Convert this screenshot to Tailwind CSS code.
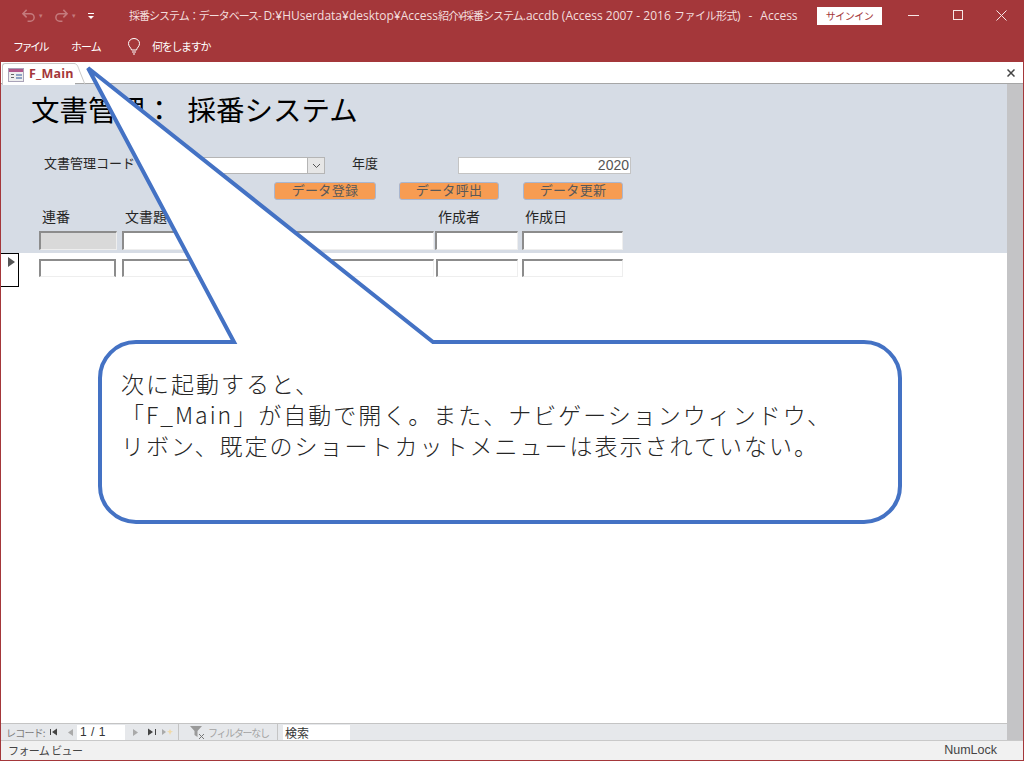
<!DOCTYPE html>
<html lang="ja">
<head>
  <meta charset="UTF-8" />
  <title>F_Main</title>
  <script src="https://cdn.jsdelivr.net/npm/@tailwindcss/browser@4"></script>
</head>
<body class="bg-white overflow-hidden font-['Noto_Sans_CJK_JP','Liberation_Sans',sans-serif]">
<div class="relative w-[1024px] h-[761px] flex flex-col bg-[#a4373a] overflow-hidden">

  <!-- title bar -->
  <div class="h-[31px] flex items-center text-white shrink-0">
    <div class="w-[129px] flex items-center pl-[21px] gap-[3px] text-[#c47a7c]">
      <svg class="w-[15px] h-[15px]" viewBox="0 0 16 16" fill="none" stroke="currentColor" stroke-width="1.6"><path d="M6 2 2 6l4 4M2 6h8a4 4 0 0 1 0 8H7"/></svg>
      <span class="text-[7px] w-[12px]">▾</span>
      <svg class="w-[15px] h-[15px]" viewBox="0 0 16 16" fill="none" stroke="currentColor" stroke-width="1.6"><path d="m10 2 4 4-4 4M14 6H6a4 4 0 0 0 0 8h3"/></svg>
      <span class="text-[7px] w-[12px]">▾</span>
      <svg class="w-[8px] h-[8px] text-white" viewBox="0 0 8 8" fill="currentColor"><rect x="1" y="1" width="6" height="1"/><path d="M1 4h6L4 7z"/></svg>
    </div>
    <div class="w-[688px] text-[11px] text-[#f3dede] whitespace-nowrap"><span class="tracking-[-1px]">採番システム：データベース-</span> <span class="font-['Open_Sans',sans-serif] text-[12px]">D:¥HUserdata¥desktop¥Access</span><span class="tracking-[-1px]">紹介¥採番システム</span><span class="font-['Open_Sans',sans-serif] text-[12px]">.accdb (Access 2007 - 2016 </span><span class="tracking-[-0.5px]">ファイル形式</span><span class="font-['Open_Sans',sans-serif] text-[12px]">)<span class="mx-[8px]">-</span>Access</span></div>
    <div class="w-[65px] h-[18px] bg-white text-[#a4373a] text-[10px] tracking-[-0.5px] flex items-center justify-center">サインイン</div>
    <div class="flex-1 flex items-center pl-[26px] text-[#f7e6e6]">
      <svg class="w-[11px] h-[11px] mr-[34px]" viewBox="0 0 11 11" stroke="currentColor"><path d="M0 5.5h11"/></svg>
      <svg class="w-[11px] h-[11px] mr-[32px]" viewBox="0 0 11 11" fill="none" stroke="currentColor"><rect x=".5" y=".5" width="9" height="9"/></svg>
      <svg class="w-[11px] h-[11px]" viewBox="0 0 11 11" stroke="currentColor"><path d="m.5.5 10 10M10.500.5l-10 10"/></svg>
    </div>
  </div>

  <!-- menu bar -->
  <div class="h-[31px] flex items-center text-white text-[11px] shrink-0 pl-[13px] pb-[1px]">
    <span class="w-[58px] tracking-[-2.500px]">ファイル</span>
    <span class="w-[56px] tracking-[-1px]">ホーム</span>
    <svg class="w-[14px] h-[17px] mr-[11px]" viewBox="0 0 14 17" fill="none" stroke="currentColor"><path d="M4.500 12C4 9.500 1.500 8.500 1.500 5.500a5.500 5 0 0 1 11 0c0 3-2.500 4-3 6.500zM5 14h4M6 16h2"/></svg>
    <span class="tracking-[-1.300px]">何をしますか</span>
  </div>

  <!-- document area -->
  <div class="flex-1 mx-[1px] bg-white flex flex-col min-h-0">
    <!-- tab strip -->
    <div class="h-[22px] shrink-0 flex border-b border-[#a6a6a6] relative">
      <div class="w-[73px] ml-[1px] mt-[1px] h-[22px] rounded-tl-[3px] border-t border-l border-[#c8c8c8] bg-white flex items-center pl-[5px] gap-[5px] z-10">
        <svg class="w-[16px] h-[14px]" viewBox="0 0 16 14"><rect x=".5" y=".5" width="15" height="13" fill="#eee" stroke="#a9a3b8"/><rect x="1" y="1" width="14" height="3" fill="#b0578a"/><path d="M3 6h3v1H3zM3 9h3v1H3z" fill="#666"/><rect x="8" y="6" width="6" height="2" fill="#8fa3c4"/><rect x="8" y="9" width="6" height="2" fill="#8fa3c4"/></svg>
        <span class="text-[12.500px] tracking-[0.2px] font-bold text-[#a4373a] font-['Open_Sans',sans-serif]">F_Main</span>
      </div>
      <svg class="w-[14px] h-[22px] mt-[1px] -ml-[1px] z-10" viewBox="0 0 14 22" fill="none" stroke="#c8c8c8"><path d="M0 .5c3 0 4 3 5 6l6 15"/></svg>
      <svg class="absolute right-[8px] top-[7px] w-[8px] h-[8px]" viewBox="0 0 8 8" stroke="#444" stroke-width="1.500"><path d="m.5.5 7 7M7.500.5l-7 7"/></svg>
    </div>

    <div class="flex-1 flex min-h-0">
      <div class="flex-1 flex flex-col min-w-0">
        <!-- form header -->
        <div class="h-[169px] bg-[#d6dce5] shrink-0 pl-[38px] text-[#262626] text-[13px]">
          <div class="h-[50px] -ml-[8px] pt-[3px] text-[28.500px] leading-[44px] text-black whitespace-nowrap">文書管理：<span class="ml-[14px]">採番システム</span></div>

          <div class="mt-[23px] h-[17px] flex items-center">
            <span class="w-[143px] pl-[5px] pb-[5px]">文書管理コード</span>
            <div class="w-[143px] h-[17px] bg-white border border-[#b5b5b5] flex justify-end">
              <div class="w-[17px] bg-[#e6e6e6] border-l border-[#b5b5b5] flex items-center justify-center">
                <svg class="w-[9px] h-[6px]" viewBox="0 0 9 6" fill="none" stroke="#555"><path d="m1 1 3.500 3.500L8 1"/></svg>
              </div>
            </div>
            <span class="w-[133px] pl-[27px] pb-[5px]">年度</span>
            <div class="w-[173px] h-[17px] bg-white border border-[#c4c4c4] text-right pr-[1px] text-[14px] leading-[15px] text-[#555] font-['Liberation_Sans',sans-serif]">2020</div>
          </div>

          <div class="mt-[8px] h-[18px] flex text-[#595959] tracking-[0.3px]">
            <div class="ml-[235px] w-[102px] bg-[#f79c52] border border-[#a9b6cf] rounded-[3px] text-center leading-[14px]">データ登録</div>
            <div class="ml-[23px] w-[100px] bg-[#f79c52] border border-[#a9b6cf] rounded-[3px] text-center leading-[14px]">データ呼出</div>
            <div class="ml-[24px] w-[100px] bg-[#f79c52] border border-[#a9b6cf] rounded-[3px] text-center leading-[14px]">データ更新</div>
          </div>

          <div class="mt-[8px] h-[18px] flex items-center text-[14px] pb-[2px]">
            <span class="w-[86px] pl-[3px]">連番</span>
            <span class="w-[313px]">文書題名</span>
            <span class="w-[87px]">作成者</span>
            <span>作成日</span>
          </div>

          <div class="h-[19px] mt-[5px] flex">
            <div class="w-[78px] mr-[5px] bg-[#d9d9d9] border-t-2 border-l-2 border-[#8c8c8c] border-r border-b border-r-[#eee] border-b-[#eee]"></div>
            <div class="w-[312px] mr-[1px] bg-white border-t-2 border-l-2 border-[#8c8c8c] border-r border-b border-r-[#eee] border-b-[#eee]"></div>
            <div class="w-[83px] mr-[4px] bg-white border-t-2 border-l-2 border-[#8c8c8c] border-r border-b border-r-[#eee] border-b-[#eee]"></div>
            <div class="w-[101px] bg-white border-t-2 border-l-2 border-[#8c8c8c] border-r border-b border-r-[#eee] border-b-[#eee]"></div>
          </div>
        </div>

        <!-- detail row -->
        <div class="flex-1 flex min-h-0">
          <div class="w-[18px] h-[34px] border border-l-0 border-black pl-[7px] pt-[3px]">
            <svg class="w-[7px] h-[10px]" viewBox="0 0 7 10" fill="#555"><path d="M0 0l7 5-7 5z"/></svg>
          </div>
          <div class="h-[18px] mt-[6px] ml-[20px] flex">
            <div class="w-[77px] mr-[6px] border-t-2 border-l-2 border-r-2 border-[#8c8c8c] border-b border-b-[#eee]"></div>
            <div class="w-[312px] mr-[2px] border-t-2 border-l-2 border-[#8c8c8c] border-r border-b border-r-[#eee] border-b-[#eee]"></div>
            <div class="w-[82px] mr-[4px] border-t-2 border-l-2 border-[#8c8c8c] border-r border-b border-r-[#eee] border-b-[#eee]"></div>
            <div class="w-[101px] border-t-2 border-l-2 border-[#8c8c8c] border-r border-b border-r-[#eee] border-b-[#eee]"></div>
          </div>
        </div>

        <!-- record navigation -->
        <div class="h-[17px] shrink-0 bg-[#e6e8eb] border-t border-[#c4c4c4] flex items-center text-[10px] text-[#7b7b7b] pl-[5px]">
          <span class="w-[44px] tracking-[-0.8px] whitespace-nowrap">レコード:</span>
          <svg class="w-[8px] h-[8px] mr-[10px] text-[#444]" viewBox="0 0 8 8" fill="currentColor"><path d="M0 1h1v6H0zM2 4l5-3.500v7z"/></svg>
          <svg class="w-[5px] h-[7px] mr-[4px] text-[#aaa]" viewBox="0 0 5 7" fill="currentColor"><path d="M5 0v7L0 3.500z"/></svg>
          <div class="w-[48px] h-[15px] bg-white text-[12px] tracking-[0.5px] leading-[15px] pl-[3px] text-[#333] font-['Liberation_Sans',sans-serif] mr-[8px]">1 / 1</div>
          <svg class="w-[5px] h-[7px] mr-[10px] text-[#aaa]" viewBox="0 0 5 7" fill="currentColor"><path d="M0 0v7l5-3.500z"/></svg>
          <svg class="w-[8px] h-[8px] mr-[6px] text-[#444]" viewBox="0 0 8 8" fill="currentColor"><path d="M7 1h1v6H7zM0 .5l5 3.500-5 3.500z"/></svg>
          <svg class="w-[11px] h-[8px]" viewBox="0 0 11 8"><path d="M0 1v6l4-3z" fill="#aaa"/><path d="M8 1l1 2 2 .5-2 1-1 2.500-1-2.500-2-1 2-.5z" fill="#f0d9a8"/></svg>
          <div class="w-[6px] h-[16px] border-r border-[#c4c4c4]"></div>
          <svg class="w-[16px] h-[15px] ml-[11px] mr-[2px]" viewBox="0 0 16 15"><path d="M0 1h12L7.500 6v6L4.500 10V6z" fill="#9a9a9a"/><path d="m9 9 5 5m0-5-5 5" stroke="#777" fill="none"/></svg>
          <span class="w-[69px] text-[#a3a3a3] tracking-[-1.300px] whitespace-nowrap">フィルターなし</span>
          <div class="w-[6px] h-[16px] border-l border-[#c4c4c4]"></div>
          <div class="w-[67px] h-[15px] bg-white text-[12px] leading-[15px] pl-[2px] text-[#333]">検索</div>
        </div>
      </div>
      <!-- scrollbar -->
      <div class="w-[16px] bg-[#c4c4c6] shrink-0"></div>
    </div>

    <!-- status bar -->
    <div class="h-[20px] shrink-0 bg-[#f1f1f1] border-t border-[#c9c9c9] flex items-center justify-between pl-[7px] pr-[26px] text-[11px] text-[#444]">
      <span class="tracking-[-0.6px]">フォーム ビュー</span>
      <span class="text-[12.500px] font-['Liberation_Sans',sans-serif]">NumLock</span>
    </div>
  </div>
  <div class="h-[1px] shrink-0"></div>

  <!-- callout -->
  <svg class="absolute left-0 top-0 w-[1024px] h-[761px]" viewBox="0 0 1024 761" fill="#fff" stroke="#4472c4" stroke-width="4" stroke-linejoin="miter">
    <path d="M88 68 234 342H136a36 36 0 0 0-36 36V486a36 36 0 0 0 36 36H864a36 36 0 0 0 36-36V378a36 36 0 0 0-36-36H433Z"/>
  </svg>
  <div class="absolute left-[121px] top-[368px] text-[23px] font-light tracking-[2px] leading-[31px] text-[#262626] whitespace-nowrap">
    <div>次に起動すると、</div>
    <div>「F_Main」が自動で開く。また、ナビゲーションウィンドウ、</div>
    <div>リボン、既定のショートカットメニューは表示されていない。</div>
  </div>
</div>
</body>
</html>
